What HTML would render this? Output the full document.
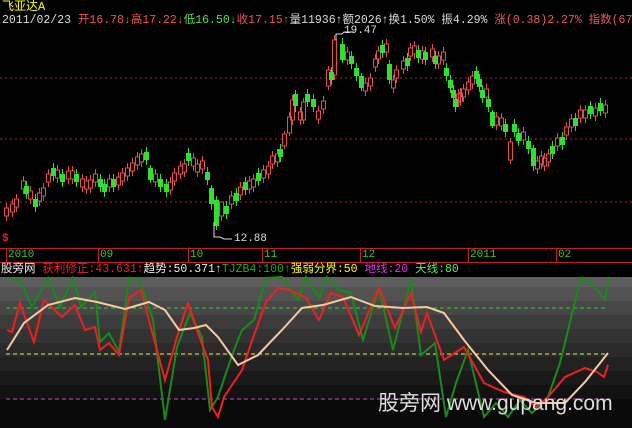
<!DOCTYPE html>
<html><head><meta charset="utf-8"><style>
body{margin:0;width:632px;height:428px;background:#000;overflow:hidden;position:relative;font-family:"Liberation Mono","Noto Sans CJK SC",monospace;font-size:12px}
.t{position:absolute;white-space:nowrap;line-height:13px}
#low{position:absolute;left:0;top:277px;width:632px;height:151px;background:linear-gradient(#5e5e5e 0,#5e5e5e 10px,#525252 10px,#525252 24px,#474747 24px,#474747 38px,#3c3c3c 38px,#3c3c3c 52px,#333 52px,#333 66px,#2a2a2a 66px,#2a2a2a 80px,#222 80px,#222 94px,#1a1a1a 94px,#1a1a1a 108px,#121212 108px,#121212 122px,#0a0a0a 122px)}
</style></head><body>
<div id="low"></div>
<svg width="632" height="428" style="position:absolute;left:0;top:0">
<g stroke="#a03030" stroke-dasharray="2,3" stroke-width="1">
<line x1="0" y1="78" x2="632" y2="78"/><line x1="0" y1="139" x2="632" y2="139"/><line x1="0" y1="202" x2="632" y2="202"/></g>
<line x1="0" y1="248.5" x2="632" y2="248.5" stroke="#c02020"/>
<line x1="0" y1="262.5" x2="632" y2="262.5" stroke="#c02020"/>
<g stroke="#c02020"><line x1="6.5" y1="249" x2="6.5" y2="262"/><line x1="98.5" y1="249" x2="98.5" y2="262"/><line x1="188.5" y1="249" x2="188.5" y2="262"/><line x1="262.5" y1="249" x2="262.5" y2="262"/><line x1="360.5" y1="249" x2="360.5" y2="262"/><line x1="468.5" y1="249" x2="468.5" y2="262"/><line x1="556.5" y1="249" x2="556.5" y2="262"/></g>
<path fill="none" stroke="#e05050" d="M6.5 203v18M12.5 199v18M16.5 194v18M23.5 176v18M30.5 186v18M39.5 188v18M43.5 183v18M48.5 169v18M57.5 165v18M68.5 166v18M72.5 166v18M82.5 174v18M86.5 176v18M90.5 175v18M95.5 169v18M109.5 174v18M118.5 172v18M122.5 168v18M127.5 163v18M132.5 158v18M137.5 152v18M141.5 149v18M155.5 169v18M170.5 177v18M174.5 168v18M180.5 161v18M184.5 159v18M193.5 153v18M197.5 159v18M202.5 156v18M221.5 203v18M231.5 191v18M240.5 182v18M249.5 176v18M253.5 174v18M263.5 165v18M268.5 161v18M272.5 151v18M277.5 149v18M284.5 131v18M289.5 112v24M292.5 95v30M300.5 107v18M303.5 98v26M318.5 106v18M323.5 96v18M328.5 66v24M334.5 35v45M347.5 47v18M365.5 78v18M370.5 73v18M375.5 54v18M378.5 46v18M386.5 39v18M393.5 75v18M396.5 65v18M403.5 56v18M410.5 43v18M414.5 41v18M422.5 46v18M432.5 44v18M438.5 51v18M443.5 47v18M458.5 89v18M460.5 88v18M463.5 84v18M468.5 77v18M472.5 71v18M486.5 84v18M496.5 112v18M501.5 113v18M510.5 138v26M523.5 127v18M537.5 156v18M541.5 151v18M544.5 153v18M548.5 149v18M557.5 133v18M566.5 122v18M571.5 114v18M580.5 105v18M585.5 105v18M595.5 103v18M605.5 100v18"/>
<path fill="#000" stroke="#e05050" d="M4.5 208h4v8h-4zM10.5 204h4v8h-4zM14.5 199h4v8h-4zM21.5 181h4v8h-4zM28.5 191h4v8h-4zM37.5 193h4v8h-4zM41.5 188h4v8h-4zM46.5 174h4v8h-4zM55.5 170h4v8h-4zM66.5 171h4v8h-4zM70.5 171h4v8h-4zM80.5 179h4v8h-4zM84.5 181h4v8h-4zM88.5 180h4v8h-4zM93.5 174h4v8h-4zM107.5 179h4v8h-4zM116.5 177h4v8h-4zM120.5 173h4v8h-4zM125.5 168h4v8h-4zM130.5 163h4v8h-4zM135.5 157h4v8h-4zM139.5 154h4v8h-4zM153.5 174h4v8h-4zM168.5 182h4v8h-4zM172.5 173h4v8h-4zM178.5 166h4v8h-4zM182.5 164h4v8h-4zM191.5 158h4v8h-4zM195.5 164h4v8h-4zM200.5 161h4v8h-4zM219.5 202h4v14h-4zM229.5 196h4v8h-4zM238.5 187h4v8h-4zM247.5 181h4v8h-4zM251.5 179h4v8h-4zM261.5 170h4v8h-4zM266.5 166h4v8h-4zM270.5 156h4v8h-4zM275.5 154h4v8h-4zM282.5 134h4v12h-4zM287.5 117h4v16h-4zM290.5 100h4v20h-4zM298.5 112h4v8h-4zM301.5 102h4v18h-4zM316.5 111h4v8h-4zM321.5 101h4v8h-4zM326.5 70h4v16h-4zM332.5 40h4v35h-4zM345.5 52h4v8h-4zM363.5 83h4v8h-4zM368.5 78h4v8h-4zM373.5 59h4v8h-4zM376.5 51h4v8h-4zM384.5 44h4v8h-4zM391.5 80h4v8h-4zM394.5 70h4v8h-4zM401.5 61h4v8h-4zM408.5 48h4v8h-4zM412.5 46h4v8h-4zM420.5 51h4v8h-4zM430.5 49h4v8h-4zM436.5 56h4v8h-4zM441.5 52h4v8h-4zM456.5 94h4v8h-4zM458.5 93h4v8h-4zM461.5 89h4v8h-4zM466.5 82h4v8h-4zM470.5 76h4v8h-4zM484.5 89h4v8h-4zM494.5 117h4v8h-4zM499.5 118h4v8h-4zM508.5 142h4v18h-4zM521.5 132h4v8h-4zM535.5 161h4v8h-4zM539.5 156h4v8h-4zM542.5 158h4v8h-4zM546.5 154h4v8h-4zM555.5 138h4v8h-4zM564.5 127h4v8h-4zM569.5 119h4v8h-4zM578.5 110h4v8h-4zM583.5 110h4v8h-4zM593.5 108h4v8h-4zM603.5 105h4v8h-4z"/>
<path fill="none" stroke="#30e030" d="M26.5 181v18M35.5 194v18M53.5 163v18M62.5 169v18M76.5 169v18M100.5 174v18M104.5 179v18M113.5 174v18M146.5 147v18M150.5 165v18M160.5 174v18M166.5 179v18M188.5 148v18M207.5 167v18M211.5 185v25M216.5 196v34M226.5 201v18M236.5 188v18M245.5 177v18M258.5 168v18M280.5 144v18M295.5 90v22M307.5 89v18M313.5 94v18M331.5 67v18M342.5 38v25M351.5 51v18M356.5 63v18M361.5 73v18M382.5 40v18M389.5 60v24M407.5 53v18M418.5 45v18M425.5 47v18M435.5 51v18M446.5 63v18M450.5 75v18M453.5 85v18M455.5 94v18M476.5 66v18M479.5 74v18M482.5 85v18M488.5 94v18M492.5 110v18M505.5 119v18M514.5 119v18M518.5 128v18M528.5 136v18M533.5 145v26M552.5 141v18M562.5 132v18M575.5 113v18M590.5 101v18M600.5 98v18"/>
<path fill="#30e030" d="M24 186h5v8h-5zM33 199h5v8h-5zM51 168h5v8h-5zM60 174h5v8h-5zM74 174h5v8h-5zM98 179h5v8h-5zM102 184h5v8h-5zM111 179h5v8h-5zM144 152h5v8h-5zM148 168h5v12h-5zM158 179h5v8h-5zM164 184h5v8h-5zM186 153h5v8h-5zM205 172h5v8h-5zM209 188h5v16h-5zM214 200h5v26h-5zM224 206h5v8h-5zM234 193h5v8h-5zM243 182h5v8h-5zM256 173h5v8h-5zM278 149h5v8h-5zM293 94h5v12h-5zM305 94h5v8h-5zM311 99h5v8h-5zM329 72h5v8h-5zM340 44h5v16h-5zM349 56h5v8h-5zM354 68h5v8h-5zM359 76h5v12h-5zM380 45h5v8h-5zM387 64h5v16h-5zM405 58h5v8h-5zM416 50h5v8h-5zM423 52h5v8h-5zM433 56h5v8h-5zM444 68h5v8h-5zM448 80h5v8h-5zM451 90h5v8h-5zM453 99h5v8h-5zM474 71h5v8h-5zM477 79h5v8h-5zM480 90h5v8h-5zM486 99h5v8h-5zM490 112h5v14h-5zM503 124h5v8h-5zM512 124h5v8h-5zM516 133h5v8h-5zM526 141h5v8h-5zM531 148h5v18h-5zM550 146h5v8h-5zM560 137h5v8h-5zM573 118h5v8h-5zM588 106h5v8h-5zM598 103h5v8h-5z"/>
<polyline points="214,222 214,237 220,237 224,239 232,239" fill="none" stroke="#ddd"/>
<polyline points="336,40 336,34 342,34 344,32 354,32" fill="none" stroke="#ddd"/>
<g stroke-dasharray="4,3" stroke-width="1">
<line x1="6" y1="308" x2="608" y2="308" stroke="#3c3"/>
<line x1="6" y1="354" x2="608" y2="354" stroke="#ee4"/>
<line x1="6" y1="399" x2="608" y2="399" stroke="#c4c"/></g>
<polyline fill="none" stroke="#1a8a1a" stroke-width="2" points="8,278 20,280 32,307 48,278 60,307 73,278 81,307 95,292 100,342 109,333 119,352 129,278 139,278 153,320 165,420 177,347 190,313 202,337 210,410 218,397 226,373 234,350 242,330 254,320 266,278 282,277 298,300 306,277 319,298 327,277 339,290 351,293 363,340 379,288 393,350 411,280 421,355 435,343 446,417 456,383 468,350 484,417 496,403 508,417 520,400 532,413 548,397 560,363 573,310 581,278 593,285 605,300 609,277"/>
<polyline fill="none" stroke="#ee2020" stroke-width="2" points="7,330 12,332 20,303 26,320 34,342 44,300 62,317 75,305 85,330 95,327 100,350 109,343 119,355 129,298 141,290 151,328 165,380 177,337 188,303 198,333 208,360 212,407 218,417 224,397 232,385 242,370 254,335 266,302 278,288 290,290 306,298 319,320 331,293 343,297 359,335 379,288 395,328 411,293 421,332 427,313 444,360 464,347 484,383 504,392 524,397 536,407 548,397 565,377 585,368 597,372 604,377 608,365"/>
<polyline fill="none" stroke="#f8c8a0" stroke-width="2" points="7,350 24,323 48,305 75,298 97,302 125,309 149,302 165,310 179,330 194,328 206,325 218,337 238,365 258,355 282,330 302,308 323,305 351,297 375,306 403,308 427,307 444,313 464,340 488,370 512,395 536,403 565,403 585,382 608,353"/>
</svg>
<div class="t" style="left:2px;top:1px;color:#ff0">飞亚达A</div>
<div class="t" style="left:2px;top:14px;font-size:11.5px;color:#ddd">2011/02/23 <span style="color:#e55">开16.78↓高17.22↓</span><span style="color:#5d5">低16.50↓</span><span style="color:#e55">收17.15↑</span>量11936↑额2026↑换1.50% 振4.29% <span style="color:#e55">涨(0.38)2.27% 指数(6722.7</span></div>
<div class="t" style="left:344px;top:25px;color:#ddd;font-size:11px">19.47</div>
<div class="t" style="left:234px;top:233px;color:#ddd;font-size:11px">12.88</div>
<div class="t" style="left:2px;top:233px;color:#e22;font-weight:bold;font-size:11px">$</div>
<div class="t" style="top:249px;left:0;color:#3c3;font-size:11px"><span style="position:absolute;left:8px">2010</span><span style="position:absolute;left:100px">09</span><span style="position:absolute;left:190px">10</span><span style="position:absolute;left:264px">11</span><span style="position:absolute;left:362px">12</span><span style="position:absolute;left:470px">2011</span><span style="position:absolute;left:558px">02</span></div>
<div class="t" style="left:1px;top:263px;font-size:11.5px;color:#eee">股旁网 <span style="color:#e22">获利修正:43.631↑</span>趋势:50.371↑<span style="color:#2a2">TJZB4:100↑</span><span style="color:#ff0">强弱分界:50</span> <span style="color:#d3d">地线:20</span> <span style="color:#5e5">天线:80</span></div>
<div class="t" style="left:378px;top:391px;font-family:'Liberation Sans','Noto Sans CJK SC',sans-serif;font-size:21px;line-height:26px;color:#ddd">股旁网 www.gupang.com</div>
</body></html>
